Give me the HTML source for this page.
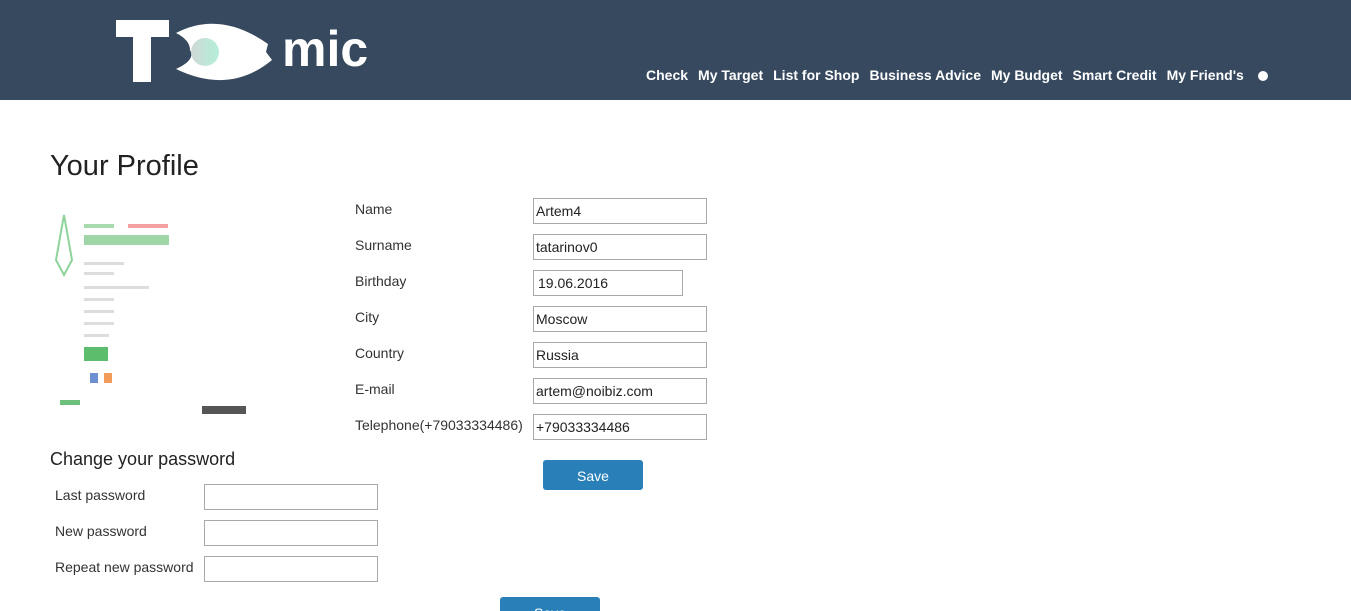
<!DOCTYPE html>
<html style="overflow:hidden;height:611px"><head><style>
body{margin:0;width:1351px;height:611px;overflow:hidden;background:#fff;font-family:"Liberation Sans",sans-serif;color:#333;position:relative}
.hdr{position:absolute;left:0;top:0;width:1351px;height:100px;background:#36495f}
.nav{position:absolute;top:67px;left:646px;color:#fff;font-weight:bold;font-size:14px;white-space:nowrap}
.nav span{margin-right:10px}
.a{position:absolute;font-size:14px;color:#333}
.in{position:absolute;border:1px solid #a9a9a9;font-size:14px;line-height:24px;padding-left:2px;box-sizing:border-box;width:174px;height:26px;color:#222}
.btn{position:absolute;background:#2980b9;color:#fff;border-radius:3px;font-size:14px;text-align:center;width:100px;height:30px;line-height:32px}
</style></head><body>
<div class="hdr">
<svg width="400" height="100" style="position:absolute;left:0;top:0">
<defs><linearGradient id="g" x1="0" x2="1"><stop offset="0" stop-color="#cfd8d6"/><stop offset="1" stop-color="#b4efd9"/></linearGradient></defs>
<rect x="116" y="20" width="53" height="17" fill="#fff"/>
<rect x="133" y="20" width="18" height="62" fill="#fff"/>
<path d="M176 33 Q220 10 268 44 L266 52 L272 60 Q230 95 176 69 Q196 60 190 50 Q190 40 176 33Z" fill="#fff"/>
<circle cx="205" cy="52" r="14" fill="url(#g)"/>
<text x="282" y="66" fill="#fff" font-family="Liberation Sans" font-weight="bold" font-size="50">mic</text>
</svg>
<div class="nav"><span>Check</span><span>My Target</span><span>List for Shop</span><span>Business Advice</span><span>My Budget</span><span>Smart Credit</span><span>My Friend's</span></div>
<div style="position:absolute;left:1258px;top:71px;width:10px;height:10px;border-radius:50%;background:#fff"></div>
</div>
<div class="a" style="left:50px;top:150px;font-size:29px;color:#222">Your Profile</div>
<svg width="200" height="216" style="position:absolute;left:50px;top:200px">
<path d="M14 15 L6 60 L14 75 L22 60Z" fill="none" stroke="#8ed39a" stroke-width="2"/>
<rect x="34" y="24" width="30" height="4" fill="#a6dbae"/><rect x="78" y="24" width="40" height="4" fill="#f5a0a0"/>
<rect x="34" y="35" width="85" height="10" fill="#9fd6a8"/>
<g fill="#ddd"><rect x="34" y="62" width="40" height="3"/><rect x="34" y="72" width="30" height="3"/><rect x="34" y="86" width="65" height="3"/><rect x="34" y="98" width="30" height="3"/><rect x="34" y="110" width="30" height="3"/><rect x="34" y="122" width="30" height="3"/><rect x="34" y="134" width="25" height="3"/></g>
<rect x="34" y="147" width="24" height="14" fill="#5cbd6c"/>
<rect x="40" y="173" width="8" height="10" fill="#6f8fd3"/><rect x="54" y="173" width="8" height="10" fill="#f29b5b"/>
<rect x="10" y="200" width="20" height="5" fill="#6cc07c"/>
<rect x="152" y="206" width="44" height="8" fill="#555"/>
</svg>
<div class="a" style="left:355px;top:201px">Name</div>
<div class="a" style="left:355px;top:237px">Surname</div>
<div class="a" style="left:355px;top:273px">Birthday</div>
<div class="a" style="left:355px;top:309px">City</div>
<div class="a" style="left:355px;top:345px">Country</div>
<div class="a" style="left:355px;top:381px">E-mail</div>
<div class="a" style="left:355px;top:417px">Telephone(+79033334486)</div>
<div class="in" style="left:533px;top:198px">Artem4</div>
<div class="in" style="left:533px;top:234px">tatarinov0</div>
<div class="in" style="left:533px;top:270px;width:150px;padding-left:4px">19.06.2016</div>
<div class="in" style="left:533px;top:306px">Moscow</div>
<div class="in" style="left:533px;top:342px">Russia</div>
<div class="in" style="left:533px;top:378px">artem@noibiz.com</div>
<div class="in" style="left:533px;top:414px">+79033334486</div>
<div class="btn" style="left:543px;top:460px">Save</div>
<div class="a" style="left:50px;top:449px;font-size:18px;color:#222">Change your password</div>
<div class="a" style="left:55px;top:487px">Last password</div>
<div class="a" style="left:55px;top:523px">New password</div>
<div class="a" style="left:55px;top:559px">Repeat new password</div>
<div class="in" style="left:204px;top:484px"></div>
<div class="in" style="left:204px;top:520px"></div>
<div class="in" style="left:204px;top:556px"></div>
<div class="btn" style="left:500px;top:597px;height:14px;overflow:hidden;border-radius:3px 3px 0 0;line-height:32px">Save</div>
</body></html>
